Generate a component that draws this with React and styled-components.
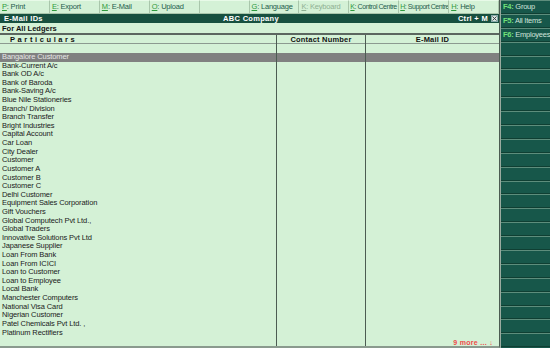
import React from "react";
import styled, { createGlobalStyle } from "styled-components";

const Global = createGlobalStyle`
  html, body { margin: 0; padding: 0; background: #d4f1d6; }
  body { font-family: "Liberation Sans", Arial, sans-serif; }
  * { box-sizing: border-box; }
`;

const Screen = styled.div`
  width: 550px;
  height: 348px;
  display: flex;
  overflow: hidden;
  background: #d4f1d6;
`;

const Main = styled.div`
  width: 500px;
  display: flex;
  flex-direction: column;
  border-right: 1px solid #4c5c52;
  border-bottom: 2px solid #8a9a8e;
`;

const Toolbar = styled.div`
  height: 14px;
  display: flex;
  border-bottom: 1px solid #a9c6ab;
`;

const ToolCell = styled.div`
  width: 50px;
  height: 13px;
  border-right: 1px solid #a9c6ab;
  border-top: 1px solid #e8fae8;
  font-size: ${(p) => (p.$tight ? "7px" : "7.5px")};
  line-height: 12px;
  padding-left: ${(p) => (p.$tight ? "1px" : "2px")};
  color: ${(p) => (p.$off ? "#8fb093" : "#1f5c4c")};
  white-space: nowrap;
  overflow: hidden;
  letter-spacing: ${(p) => (p.$tight ? "-0.45px" : "-0.2px")};
  b {
    font-weight: normal;
    color: ${(p) => (p.$off ? "#8fb093" : "#2f9a3c")};
    text-decoration: underline;
  }
`;

const TitleBar = styled.div`
  height: 9px;
  background: #17503f;
  color: #fff;
  font-weight: bold;
  font-size: 7.5px;
  line-height: 9px;
  display: grid;
  grid-template-columns: 1fr auto 1fr;
  padding: 0 1px 0 4px;
  letter-spacing: 0.3px;
`;

const TitleRight = styled.div`
  display: flex;
  justify-content: flex-end;
  align-items: center;
  gap: 3px;
`;

const CloseBox = styled.span`
  width: 7px;
  height: 7px;
  background: #d8e8de;
  border: 1px solid #8aa;
  display: flex;
  align-items: center;
  justify-content: center;
`;

const Subtitle = styled.div`
  height: 10px;
  font-size: 7.5px;
  font-weight: bold;
  line-height: 11px;
  padding-left: 2px;
  color: #111;
`;

const cols = "277px 89px 1fr";

const Header = styled.div`
  display: grid;
  grid-template-columns: ${cols};
  border-top: 2px solid #5c6660;
  border-bottom: 1px solid #8c9a90;
  height: 11px;
  font-size: 7.5px;
  font-weight: bold;
  line-height: 9px;
  color: #111;
`;

const HeadCell = styled.div`
  border-right: ${(p) => (p.$last ? "none" : "1px solid #4c5c52")};
  text-align: ${(p) => (p.$left ? "left" : "center")};
  padding-left: ${(p) => (p.$left ? "10px" : "0")};
  letter-spacing: ${(p) => (p.$left ? "2.6px" : "0.2px")};
`;

const Body = styled.div`
  flex: 1;
  display: flex;
  flex-direction: column;
  position: relative;
`;

const Row = styled.div`
  display: grid;
  grid-template-columns: ${cols};
  height: ${(p) => p.$h || "8.62px"};
  background: ${(p) => (p.$sel ? "#808080" : "transparent")};
  color: ${(p) => (p.$sel ? "#e6e6e6" : "#1a1a1a")};
  font-size: 7.5px;
  line-height: 8.6px;
  flex: ${(p) => (p.$fill ? 1 : "none")};
`;

const Cell = styled.div`
  border-right: ${(p) => (p.$last ? "none" : "1px solid #4c5c52")};
  padding-left: 2px;
  white-space: nowrap;
  letter-spacing: -0.1px;
`;

const More = styled.div`
  position: absolute;
  right: 6px;
  bottom: 0px;
  font-size: 7px;
  font-weight: bold;
  color: #f04848;
  letter-spacing: 0.3px;
`;

const Side = styled.div`
  width: 50px;
  background: #17574a;
  border-left: 1px solid #9aaba0;
  display: flex;
  flex-direction: column;
`;

const SideButton = styled.div`
  height: 13.9px;
  flex: none;
  border-top: 1px solid #5d8d7c;
  border-bottom: 1px solid #0f3f33;
  font-size: 7.5px;
  line-height: 12px;
  padding-left: 2px;
  color: #cfe3da;
  white-space: nowrap;
  overflow: hidden;
  letter-spacing: -0.25px;
  b {
    color: #6fe07a;
    font-weight: bold;
  }
`;

const tools = [
  ["P", "Print"],
  ["E", "Export"],
  ["M", "E-Mail"],
  ["O", "Upload"],
  null,
  ["G", "Language"],
  ["K", "Keyboard", true],
  ["K", "Control Centre", false, true],
  ["H", "Support Centre", false, true],
  ["H", "Help"],
];

const ledgers = [
  "Bangalore Customer",
  "Bank-Current A/c",
  "Bank OD A/c",
  "Bank of Baroda",
  "Bank-Saving A/c",
  "Blue Nile Stationeries",
  "Branch/ Division",
  "Branch Transfer",
  "Bright Industries",
  "Capital Account",
  "Car Loan",
  "City Dealer",
  "Customer",
  "Customer A",
  "Customer B",
  "Customer C",
  "Delhi Customer",
  "Equipment Sales Corporation",
  "Gift Vouchers",
  "Global Computech Pvt Ltd.,",
  "Global Traders",
  "Innovative Solutions Pvt Ltd",
  "Japanese Supplier",
  "Loan From Bank",
  "Loan From ICICI",
  "Loan to Customer",
  "Loan to Employee",
  "Local Bank",
  "Manchester Computers",
  "National Visa Card",
  "Nigerian Customer",
  "Patel Chemicals Pvt Ltd. ,",
  "Platinum Rectifiers",
];

const sideButtons = [
  ["F4:", "Group"],
  ["F5:", "All Items"],
  ["F6:", "Employees"],
];

const App = () => {
  return (
    <>
      <Global />
      <Screen>
        <Main>
          <Toolbar>
            {tools.map((t, i) => (
              <ToolCell key={i} $off={t && t[2]} $tight={t && t[3]}>
                {t && (
                  <>
                    <b>{t[0]}</b>: {t[1]}
                  </>
                )}
              </ToolCell>
            ))}
          </Toolbar>
          <TitleBar>
            <span>E-Mail IDs</span>
            <span>ABC Company</span>
            <TitleRight>
              <span>Ctrl + M</span>
              <CloseBox>
                <svg width="5" height="5" viewBox="0 0 5 5">
                  <path d="M0.5 0.5L4.5 4.5M4.5 0.5L0.5 4.5" stroke="#334" strokeWidth="0.9" />
                </svg>
              </CloseBox>
            </TitleRight>
          </TitleBar>
          <Subtitle>For All Ledgers</Subtitle>
          <Header>
            <HeadCell $left>Particulars</HeadCell>
            <HeadCell>Contact Number</HeadCell>
            <HeadCell $last>E-Mail ID</HeadCell>
          </Header>
          <Body>
            <Row $h="9px">
              <Cell />
              <Cell />
              <Cell $last />
            </Row>
            {ledgers.map((name, i) => (
              <Row key={name} $sel={i === 0}>
                <Cell>{name}</Cell>
                <Cell />
                <Cell $last />
              </Row>
            ))}
            <Row $fill>
              <Cell />
              <Cell />
              <Cell $last />
            </Row>
            <More>9 more ... ↓</More>
          </Body>
        </Main>
        <Side>
          {Array.from({ length: 25 }).map((_, i) => (
            <SideButton key={i}>
              {sideButtons[i] && (
                <>
                  <b>{sideButtons[i][0]}</b> {sideButtons[i][1]}
                </>
              )}
            </SideButton>
          ))}
        </Side>
      </Screen>
    </>
  );
};

export default App;
